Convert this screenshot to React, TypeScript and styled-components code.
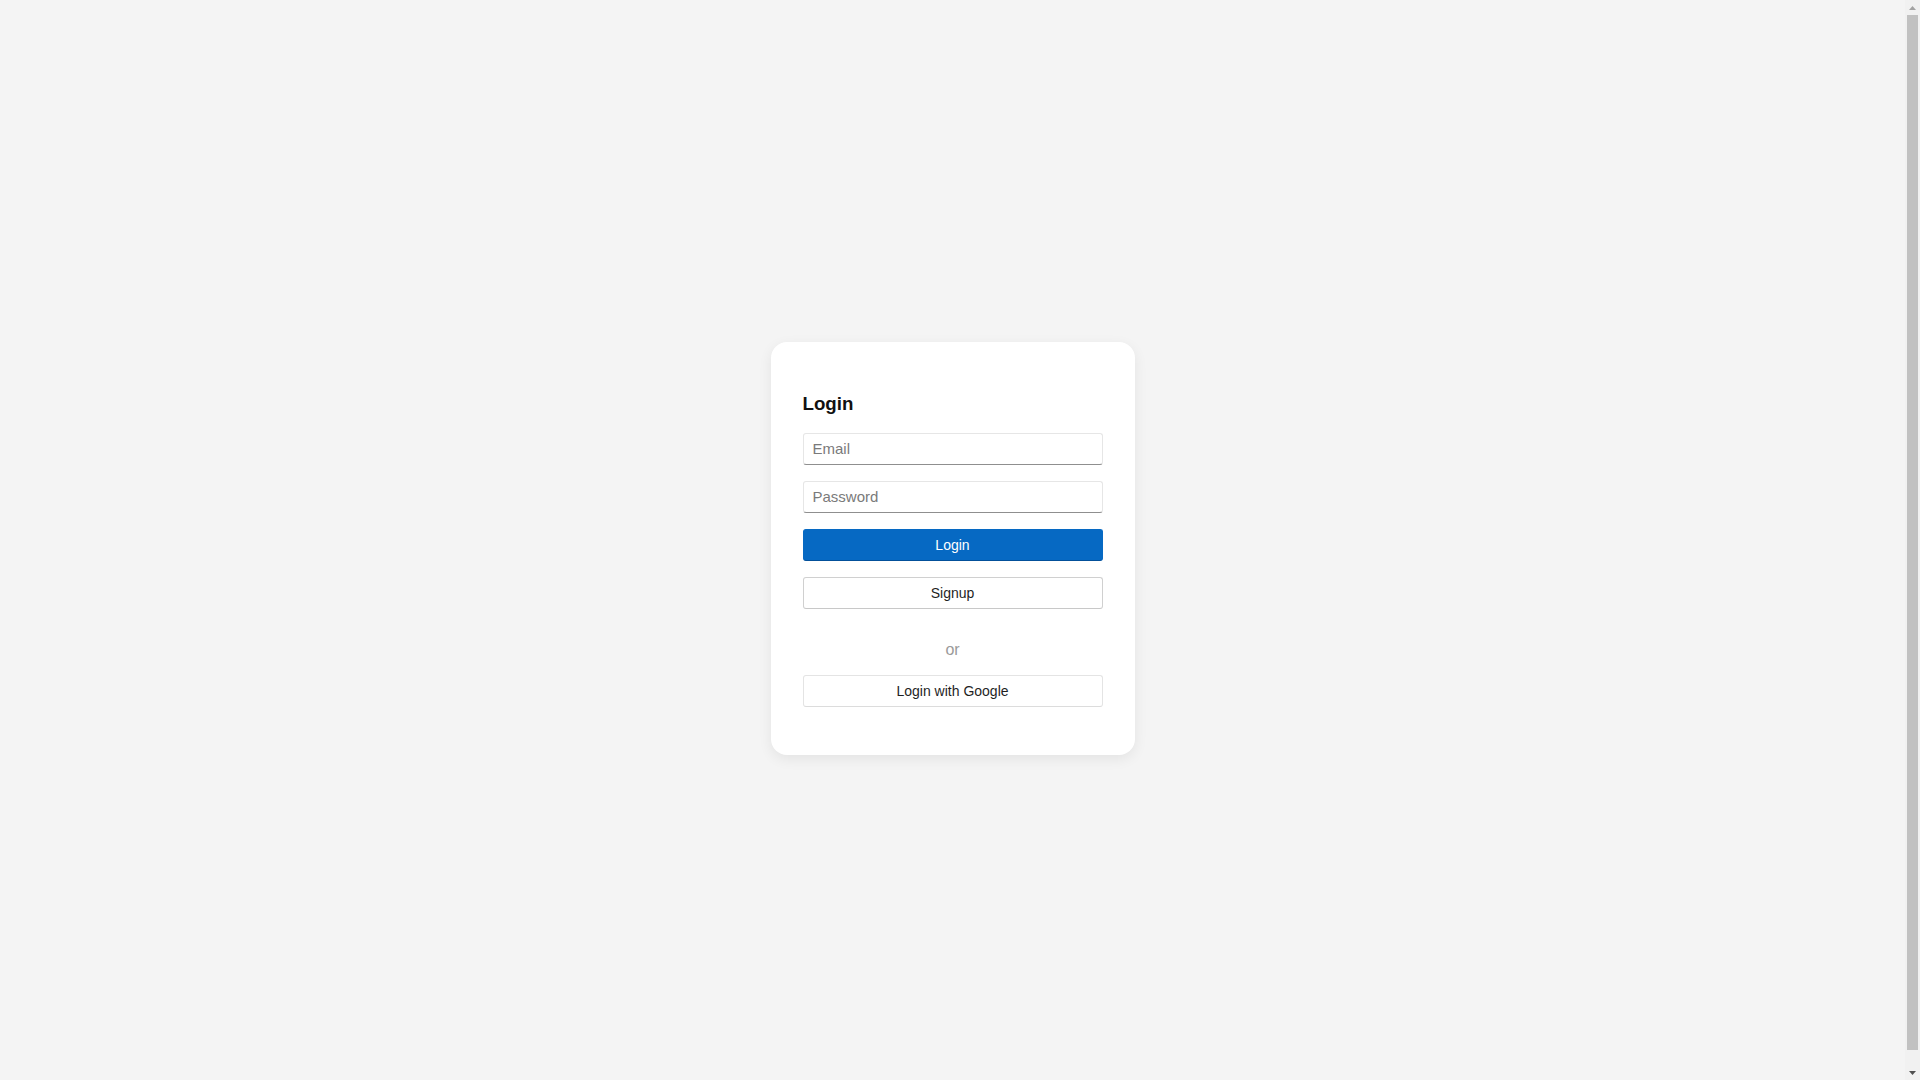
import React, { useState } from "react";
import styled, { createGlobalStyle } from "styled-components";

const GlobalStyle = createGlobalStyle`
  html, body {
    margin: 0;
    overflow: hidden;
  }
  body {
    background: #f4f4f4;
    font-family: "Liberation Sans", Arial, sans-serif;
    color: #222;
  }
  * {
    box-sizing: border-box;
  }
`;

const Viewport = styled.div`
  display: flex;
  height: 100vh;
`;

const Page = styled.div`
  flex: 1;
  padding-top: 16px;
  display: flex;
  align-items: center;
  justify-content: center;
`;

// the window scrollbar seen on the right of the page
const ScrollRail = styled.div`
  width: 15px;
  background: #f1f1f1;
  display: flex;
  flex-direction: column;
  align-items: center;
`;

const ScrollArrow = styled.div`
  height: 15px;
  width: 100%;
  display: flex;
  align-items: center;
  justify-content: center;
`;

const ScrollThumb = styled.div`
  flex: 1;
  width: 11px;
  margin: 0 0 15px;
  background: #c1c1c1;
`;

const Card = styled.form`
  width: 364px;
  padding: 32px;
  background: #ffffff;
  border-radius: 16px;
  box-shadow: 0 4px 14px rgba(0, 0, 0, 0.07);
  display: flex;
  flex-direction: column;
`;

const Title = styled.h3`
  margin: 19px 0 18px;
  font-size: 18.72px;
  font-weight: bold;
  color: #111;
`;

const Input = styled.input`
  height: 32px;
  margin: 0 0 16px;
  padding: 0 9px;
  border: 1px solid #e6e6e6;
  border-bottom-color: #8f8f8f;
  border-radius: 3px;
  background: #fff;
  font-family: inherit;
  font-size: 15px;
  color: #222;
  outline: none;
  &::placeholder {
    color: #7a7a7a;
  }
`;

const Button = styled.button<{ $variant?: "primary" | "default" | "light" }>`
  height: 32px;
  margin: 0 0 16px;
  border-radius: 3px;
  font-family: inherit;
  font-size: 14px;
  cursor: pointer;
  background: ${(p) => (p.$variant === "primary" ? "#0669c3" : "#ffffff")};
  color: ${(p) => (p.$variant === "primary" ? "#ffffff" : "#1f1f1f")};
  border: 1px solid
    ${(p) =>
      p.$variant === "primary"
        ? "#0669c3"
        : p.$variant === "light"
        ? "#e4e4e4"
        : "#d0d0d0"};
  border-bottom-color: ${(p) =>
    p.$variant === "primary" ? "#03509a" : p.$variant === "light" ? "#dcdcdc" : "#c8c8c8"};
`;

const Divider = styled.p`
  margin: 16px 0;
  text-align: center;
  font-size: 16px;
  color: #9a9a9a;
`;

const App = () => {
  const [email, setEmail] = useState("");
  const [password, setPassword] = useState("");

  return (
    <>
      <GlobalStyle />
      <Viewport>
        <Page>
          <Card onSubmit={(e) => e.preventDefault()}>
            <Title>Login</Title>
            <Input
              type="email"
              placeholder="Email"
              value={email}
              onChange={(e) => setEmail(e.target.value)}
            />
            <Input
              type="password"
              placeholder="Password"
              value={password}
              onChange={(e) => setPassword(e.target.value)}
            />
            <Button $variant="primary" type="submit">
              Login
            </Button>
            <Button type="button">Signup</Button>
            <Divider>or</Divider>
            <Button $variant="light" type="button">
              Login with Google
            </Button>
          </Card>
        </Page>
        <ScrollRail>
          <ScrollArrow>
            <svg width="7" height="4" viewBox="0 0 7 4">
              <path d="M0 4 L3.5 0 L7 4 Z" fill="#a3a3a3" />
            </svg>
          </ScrollArrow>
          <ScrollThumb />
          <ScrollArrow>
            <svg width="7" height="4" viewBox="0 0 7 4">
              <path d="M0 0 L7 0 L3.5 4 Z" fill="#505050" />
            </svg>
          </ScrollArrow>
        </ScrollRail>
      </Viewport>
    </>
  );
};

export default App;
